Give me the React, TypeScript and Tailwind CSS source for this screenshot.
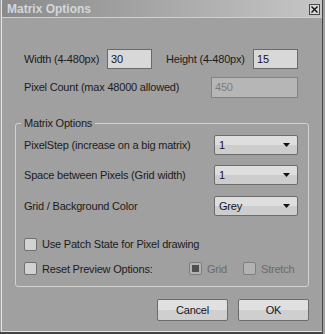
import { useState } from "react";

function Select({ value }: { value: string }) {
  return (
    <div className="w-[84px] h-[20px] flex items-center justify-between pl-[4px] pr-[7px] rounded-[2px] border border-[#6c6c6c] bg-gradient-to-b from-[#dedede] from-50% to-[#cdcdcd] to-50% text-[#141428]">
      <span>{value}</span>
      <svg width="7" height="4" viewBox="0 0 7 4">
        <path d="M0 0h7L3.5 4z" fill="#111" />
      </svg>
    </div>
  );
}

function Check({
  checked,
  disabled,
}: {
  checked?: boolean;
  disabled?: boolean;
}) {
  return (
    <span
      className={`w-[13px] h-[13px] shrink-0 rounded-[2px] border flex items-center justify-center ${
        disabled
          ? "border-[#7e7e7e] bg-[#b2b2b2]"
          : "border-[#707070] bg-[#d2d2d2]"
      }`}
    >
      {checked && <span className="w-[7px] h-[7px] bg-[#505050]" />}
    </span>
  );
}

export default function App() {
  const [width, setWidth] = useState("30");
  const [height, setHeight] = useState("15");

  return (
    <div className="w-[325px] h-[334px] bg-[#a0a0a0] font-['Liberation_Sans',Arial,sans-serif] text-[11px] tracking-[-0.2px] text-[#1c1c1c]">
      <div className="w-[323px] h-[334px] border-r border-b-2 border-[#454545] flex flex-col">
        <div className="ml-px flex-1 border-l border-b border-[#e6e6e6] flex flex-col">
          {/* Title bar */}
          <div className="h-[18px] flex items-center justify-between pl-[5px] pr-[2px] bg-gradient-to-r from-[#8a8a8a] to-[#c6c6c6] border-b border-[#d0d0d0]">
            <span className="text-[12px] font-bold tracking-normal text-[#d2d7dc]">
              Matrix Options
            </span>
            <span className="w-[11px] h-[11px] mt-[1px] border border-[#4a4a4a] bg-[#d8d8d8] flex items-center justify-center">
              <svg width="7" height="7" viewBox="0 0 7 7">
                <path d="M0.5 0.5l6 6M6.5 0.5l-6 6" stroke="#111" strokeWidth="1.4" />
              </svg>
            </span>
          </div>

          {/* Size */}
          <div className="mt-[31px] pl-[22px] flex items-center">
            <span className="w-[83px]">Width (4-480px)</span>
            <input
              value={width}
              onChange={(e) => setWidth(e.target.value)}
              className="w-[45px] h-[20px] px-[3px] border border-[#6a6a6a] bg-[#d8d8d8] text-[#141428] outline-none"
            />
            <span className="ml-[14px] w-[87px]">Height (4-480px)</span>
            <input
              value={height}
              onChange={(e) => setHeight(e.target.value)}
              className="w-[45px] h-[20px] px-[3px] border border-[#6a6a6a] bg-[#d8d8d8] text-[#141428] outline-none"
            />
          </div>
          <div className="mt-[8px] pl-[22px] flex items-center">
            <span className="w-[187px]">Pixel Count (max 48000 allowed)</span>
            <div className="w-[87px] h-[21px] px-[3px] flex items-center border border-[#828282] bg-[#b6b6b6] text-[#7c7c7c]">
              450
            </div>
          </div>

          {/* Group */}
          <fieldset className="mt-[19px] ml-[13px] w-[294px] h-[170px] border border-[#d2d2d2] rounded-[3px] pl-[8px]">
            <legend className="-ml-[3px] px-[3px] leading-[13px]">Matrix Options</legend>
            <div className="mt-[5px] flex items-center justify-between pr-[10px]">
              <span>PixelStep (increase on a big matrix)</span>
              <Select value="1" />
            </div>
            <div className="mt-[10px] flex items-center justify-between pr-[10px]">
              <span>Space between Pixels (Grid width)</span>
              <Select value="1" />
            </div>
            <div className="mt-[11px] flex items-center justify-between pr-[10px]">
              <span>Grid / Background Color</span>
              <Select value="Grey" />
            </div>
            <div className="mt-[20px] flex items-center gap-[5px]">
              <Check />
              <span>Use Patch State for Pixel drawing</span>
            </div>
            <div className="mt-[8px] flex items-center">
              <Check />
              <span className="ml-[5px] w-[147px]">Reset Preview Options:</span>
              <Check checked disabled />
              <span className="ml-[5px] w-[36px] text-[#6a6a6a]">Grid</span>
              <Check disabled />
              <span className="ml-[5px] text-[#6a6a6a]">Stretch</span>
            </div>
          </fieldset>

          {/* Buttons */}
          <div className="mt-[12px] ml-[155px] flex gap-[10px]">
            <button className="w-[71px] h-[22px] rounded-[2px] border border-[#6c6c6c] bg-gradient-to-b from-[#e0e0e0] from-50% to-[#cfcfcf] to-50% text-[#141428]">
              Cancel
            </button>
            <button className="w-[71px] h-[22px] rounded-[2px] border border-[#6c6c6c] bg-gradient-to-b from-[#e0e0e0] from-50% to-[#cfcfcf] to-50% text-[#141428]">
              OK
            </button>
          </div>
        </div>
      </div>
    </div>
  );
}
